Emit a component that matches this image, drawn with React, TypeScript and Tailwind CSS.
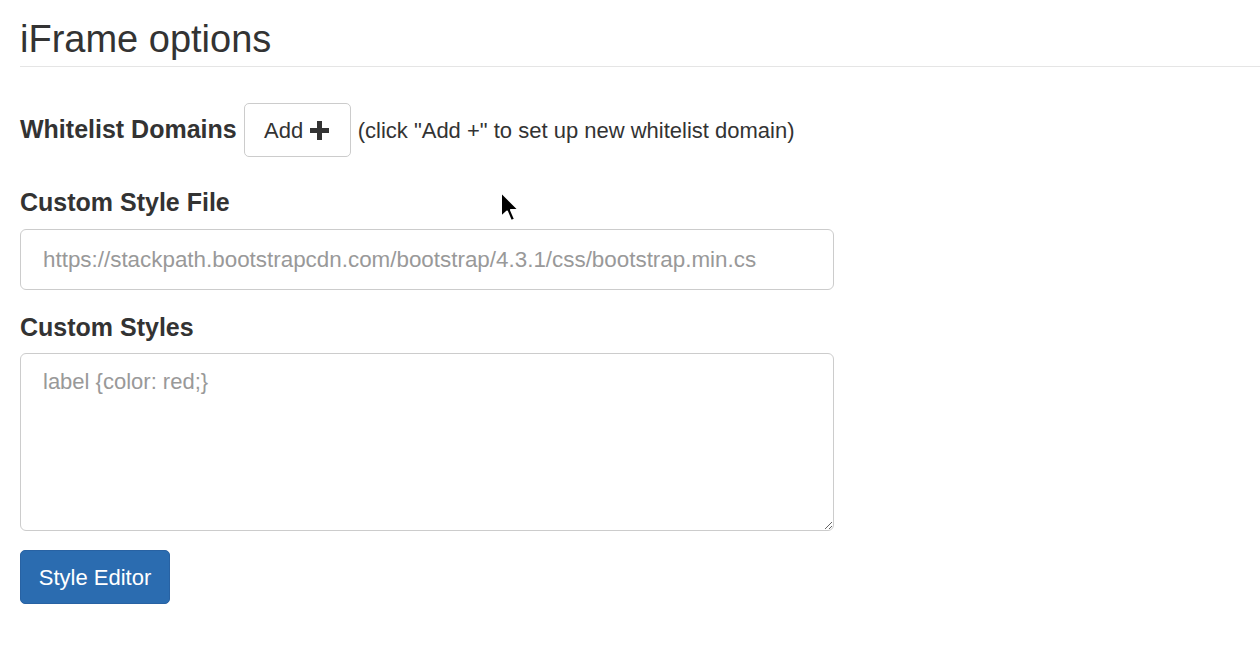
function PlusIcon() {
  // glyphicon-style heavy plus
  return (
    <svg width="21" height="21" viewBox="0 0 21 21" className="text-[#333]">
      <rect x="8" y="1" width="5" height="19" fill="currentColor" />
      <rect x="1" y="8" width="19" height="5" fill="currentColor" />
    </svg>
  );
}

function Cursor() {
  // mouse pointer that was captured in the screenshot
  return (
    <svg
      className="absolute left-[498px] top-[190px] pointer-events-none"
      width="24"
      height="36"
      viewBox="0 0 24 36"
    >
      <path
        d="M3 2 L3 27 L9 21.5 L13 31 L17 29.3 L13 20 L21 20 Z"
        fill="#000"
        stroke="#fff"
        strokeWidth="2"
        strokeLinejoin="round"
      />
    </svg>
  );
}

export default function App() {
  return (
    <div className="relative min-h-screen bg-white pl-5 pt-[18px] text-[#333] font-['Liberation_Sans',Helvetica,Arial,sans-serif]">
      <h3 className="text-[38px] leading-[42px] pb-[6px] border-b border-[#e5e5e5]">
        iFrame options
      </h3>

      <div className="w-[814px]">
        <div className="mt-[36px] flex items-center h-[54px]">
          <label className="text-[25px] font-bold">Whitelist Domains</label>
          <button className="ml-[7px] h-[54px] w-[107px] border border-[#ccc] rounded-[5px] bg-white text-[22px] text-[#333] flex items-center justify-center gap-[6px]">
            Add
            <PlusIcon />
          </button>
          <span className="ml-[7px] text-[22px]">
            (click "Add +" to set up new whitelist domain)
          </span>
        </div>

        <label className="block mt-[28px] mb-[9px] text-[25px] leading-[35px] font-bold">
          Custom Style File
        </label>
        <input
          type="text"
          placeholder="https://stackpath.bootstrapcdn.com/bootstrap/4.3.1/css/bootstrap.min.css"
          className="block h-[61px] w-[814px] border border-[#ccc] rounded-[6px] pl-[22px] pr-[76px] text-[22.4px] outline-none placeholder:text-[#999]"
        />

        <label className="block mt-[20px] mb-[8px] text-[25px] leading-[35px] font-bold">
          Custom Styles
        </label>
        <textarea
          placeholder="label {color: red;}"
          className="block h-[178px] w-[814px] border border-[#ccc] rounded-[6px] px-[22px] py-[12px] text-[22px] leading-[31px] outline-none placeholder:text-[#999]"
        />

        <button className="mt-[19px] h-[54px] w-[150px] rounded-[5px] bg-[#2b6cb0] border border-[#2862a3] text-white text-[22px]">
          Style Editor
        </button>
      </div>

      <Cursor />
    </div>
  );
}
